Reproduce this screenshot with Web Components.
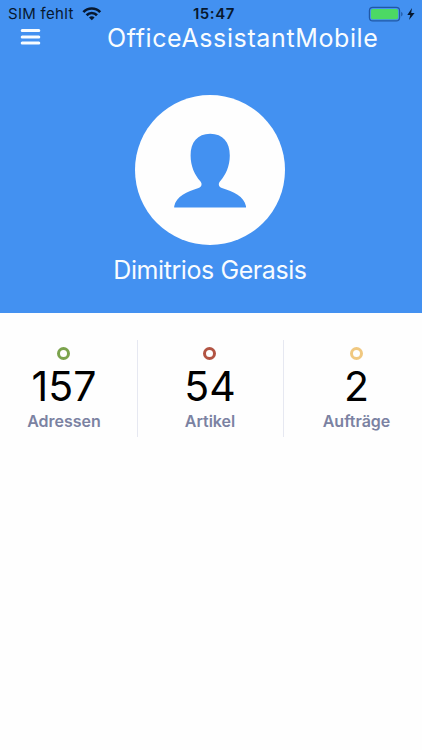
<!DOCTYPE html>
<html lang="de">
<head>
<meta charset="utf-8">
<meta name="viewport" content="width=device-width, initial-scale=1">
<title>OfficeAssistantMobile</title>
<style>
    html, body {
        height: 100%;
        overflow: hidden;
    }

    body {
        margin: 0;
        background: #fefefe;
        font-family: Inter, "Liberation Sans", sans-serif;
    }
</style>
</head>
<body>
<oa-app></oa-app>
<script>
    class StatusBar extends HTMLElement {
        constructor() {
            super();
            this.attachShadow({ mode: 'open' });
            this.shadowRoot.innerHTML = `
            <style>
                :host {
                    display: grid;
                    grid-template-columns: 1fr auto 1fr;
                    align-items: center;
                    height: 26px;
                    padding: 0 6px 0 8px;
                    box-sizing: border-box;
                    color: #07182f;
                    font-size: 15px;
                    line-height: 26px;
                    white-space: nowrap;
                }

                .carrier, .battery {
                    display: flex;
                    align-items: center;
                }

                .carrier {
                    gap: 8px;
                    letter-spacing: 0.3px;
                }

                .carrier span, .time {
                    padding-top: 1px;
                }

                .time {
                    padding-left: 4px;
                    font-weight: 600;
                    letter-spacing: 0.6px;
                }

                .battery {
                    justify-content: flex-end;
                }

                svg {
                    display: block;
                }
            </style>
            <div class="carrier">
                <span>SIM fehlt</span>
                <svg width="20" height="16" viewBox="0 0 20 16" fill="none" stroke="#07182f" stroke-width="2.7">
                    <path d="M1.4 6.1a11.6 11.6 0 0 1 16.8 0"/>
                    <path d="M4.6 9.2a7.3 7.3 0 0 1 10.4 0"/>
                    <path d="M9.8 14.3 7 11.4a3.9 3.9 0 0 1 5.6 0z" fill="#07182f" stroke="none"/>
                </svg>
            </div>
            <div class="time">15:47</div>
            <div class="battery">
                <svg width="48" height="16" viewBox="0 0 48 16">
                    <rect x="1.4" y="1.4" width="30.2" height="13.4" rx="3.4" fill="none" stroke="#2158a5" stroke-width="1.2"/>
                    <rect x="2.9" y="2.9" width="27.2" height="10.4" rx="1.8" fill="#4cd964"/>
                    <path d="M33.2 5.8c1.9.8 1.9 3.8 0 4.6z" fill="#2158a5"/>
                    <path d="M44 2 39.3 8.9h3L41 14 46.6 7h-3.4z" fill="#07182f"/>
                </svg>
            </div>
            `;
        }
    }

    class TitleBar extends HTMLElement {
        constructor() {
            super();
            this.attachShadow({ mode: 'open' });
            this.shadowRoot.innerHTML = `
            <style>
                :host {
                    display: flex;
                    align-items: center;
                    height: 24px;
                    padding-left: 20px;
                    color: #f8fcff;
                }

                button {
                    display: block;
                    padding: 0 0 2px;
                    border: 0;
                    background: none;
                }

                svg {
                    display: block;
                }

                h1 {
                    margin: -1px 0 0 66px;
                    font-size: 25px;
                    font-weight: 400;
                    line-height: 24px;
                    letter-spacing: 0.62px;
                    white-space: nowrap;
                }
            </style>
            <button aria-label="Menü">
                <svg width="21" height="18" viewBox="0 0 21 18" stroke="#f8fcff" stroke-width="3" stroke-linecap="round">
                    <path d="M2.2 2.6h16.6M2.2 8.9h16.6M2.2 15.1h16.6"/>
                </svg>
            </button>
            <h1><slot></slot></h1>
            `;
        }
    }

    class UserProfile extends HTMLElement {
        constructor() {
            super();
            this.attachShadow({ mode: 'open' });
            this.shadowRoot.innerHTML = `
            <style>
                :host {
                    display: flex;
                    flex-direction: column;
                    align-items: center;
                    padding: 45px 3px 0 0;
                    color: #f8fcff;
                }

                .avatar {
                    width: 150px;
                    height: 150px;
                    border-radius: 50%;
                    background: #fefefe;
                }

                svg {
                    display: block;
                }

                .name {
                    margin: 9px 0 0 1px;
                    font-size: 25px;
                    line-height: 32px;
                    letter-spacing: -0.42px;
                    white-space: nowrap;
                }
            </style>
            <div class="avatar">
                <svg width="150" height="150" viewBox="0 0 150 150">
                    <path fill="#4391f1" d="M75.2 38.8C88 38.8 94.8 47.5 94.8 60.5 94.8 71.5 90.5 80 85.3 86 82.9 88.7 83.4 91.6 86.9 93.1 98.5 96.8 109 101.5 111 111.2V112.6H39.2V111.2C41.2 101.5 52 96.8 63.5 93.1 67 91.6 67.5 88.7 65.1 86 59.9 80 55.6 71.5 55.6 60.5 55.6 47.5 62.4 38.8 75.2 38.8Z"/>
                </svg>
            </div>
            <div class="name"><slot></slot></div>
            `;
        }
    }

    class StatItem extends HTMLElement {
        constructor() {
            super();
            this.attachShadow({ mode: 'open' });
            this.shadowRoot.innerHTML = `
            <style>
                :host {
                    display: flex;
                    flex-direction: column;
                    align-items: center;
                    box-sizing: border-box;
                    height: 97px;
                    padding: 7px 1px 0 0;
                }

                .ring {
                    box-sizing: border-box;
                    width: 13px;
                    height: 13px;
                    margin-right: 1px;
                    border: 3px solid var(--ring-color, #ccc);
                    border-radius: 50%;
                }

                .value {
                    margin-top: 1px;
                    color: #000;
                    font-size: 41px;
                    line-height: 50px;
                }

                .label {
                    color: #7b82a2;
                    font-size: 16px;
                    font-weight: 600;
                    line-height: 20px;
                }
            </style>
            <div class="ring"></div>
            <div class="value"><slot name="value"></slot></div>
            <div class="label"><slot></slot></div>
            `;
        }
    }

    class StatRow extends HTMLElement {
        constructor() {
            super();
            this.attachShadow({ mode: 'open' });
            // The row is a bit wider than the screen on both sides
            this.shadowRoot.innerHTML = `
            <style>
                :host {
                    display: grid;
                    grid-template-columns: repeat(3, 146px);
                    margin: 27px -8px 0;
                }

                ::slotted(:not(:last-child)) {
                    border-right: 1px solid #e6e8f1;
                }
            </style>
            <slot></slot>
            `;
        }
    }

    class App extends HTMLElement {
        constructor() {
            super();
            this.attachShadow({ mode: 'open' });
            this.shadowRoot.innerHTML = `
            <style>
                :host {
                    display: block;
                    height: 100%;
                    overflow: hidden;
                }

                header {
                    height: 313px;
                    background: #4391f1;
                }

                .green { --ring-color: #7ba34d; }
                .red { --ring-color: #b25443; }
                .yellow { --ring-color: #f0c880; }
            </style>
            <header>
                <oa-status-bar></oa-status-bar>
                <oa-title-bar>OfficeAssistantMobile</oa-title-bar>
                <oa-user-profile>Dimitrios Gerasis</oa-user-profile>
            </header>
            <oa-stat-row>
                <oa-stat-item class="green"><span slot="value">157</span>Adressen</oa-stat-item>
                <oa-stat-item class="red"><span slot="value">54</span>Artikel</oa-stat-item>
                <oa-stat-item class="yellow"><span slot="value">2</span>Aufträge</oa-stat-item>
            </oa-stat-row>
            `;
        }
    }

    customElements.define('oa-status-bar', StatusBar);
    customElements.define('oa-title-bar', TitleBar);
    customElements.define('oa-user-profile', UserProfile);
    customElements.define('oa-stat-item', StatItem);
    customElements.define('oa-stat-row', StatRow);
    customElements.define('oa-app', App);
</script>
</body>
</html>
